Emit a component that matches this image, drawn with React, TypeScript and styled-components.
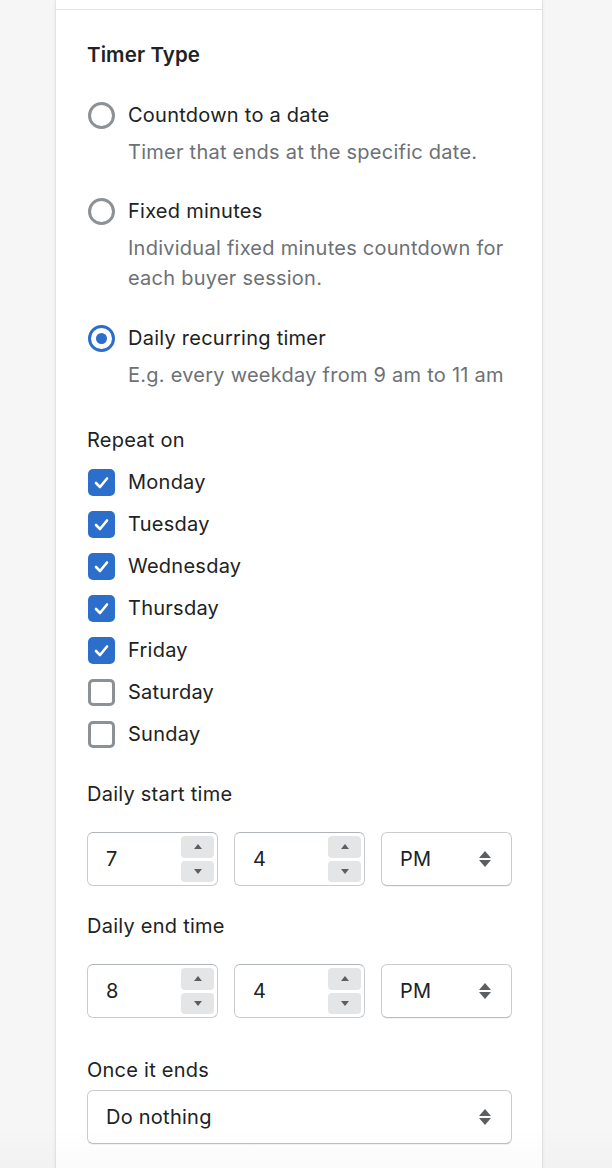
import React from "react";
import styled, { createGlobalStyle } from "styled-components";

const Global = createGlobalStyle`
  html, body { margin: 0; padding: 0; background: #f6f6f7; }
  body { font-family: Inter, "Noto Sans", "Liberation Sans", sans-serif; color: #202223; letter-spacing: 0.25px; }
  * { box-sizing: border-box; }
`;

const Page = styled.div`
  min-height: 1168px;
  position: relative;
  overflow: hidden;
`;

const Card = styled.div`
  margin-left: 56px;
  width: 486px;
  min-height: 1168px;
  background: #fff;
  box-shadow: 0 0 0 1px rgba(63, 63, 68, 0.06), 0 1px 4px rgba(63, 63, 68, 0.12);
`;

const TopSection = styled.div`
  height: 10px;
  border-bottom: 1px solid #e1e3e5;
`;

const Section = styled.div`
  padding: 30px 31px 40px 31px;
  display: flex;
  flex-direction: column;
`;

const Heading = styled.h2`
  margin: 0;
  font-size: 20.5px;
  font-weight: 600;
  line-height: 30px;
  letter-spacing: 0.1px;
`;

const ChoiceList = styled.div<{ $mt: number }>`
  display: flex;
  flex-direction: column;
  margin-top: ${(p) => p.$mt}px;
`;

const Choice = styled.div<{ $mt?: number }>`
  margin-top: ${(p) => p.$mt ?? 0}px;
`;

const ChoiceRow = styled.label`
  display: flex;
  align-items: center;
  gap: 13px;
  height: 30px;
  font-size: 20px;
  line-height: 30px;
`;

const Help = styled.div`
  margin-top: 7px;
  padding-left: 41px;
  font-size: 20px;
  line-height: 30px;
  color: #6d7175;
`;

const RadioCircle = styled.span<{ $on?: boolean }>`
  flex: none;
  margin-left: 1px;
  width: 27px;
  height: 27px;
  border-radius: 50%;
  border: 3px solid ${(p) => (p.$on ? "#2c6ecb" : "#8c9196")};
  display: flex;
  align-items: center;
  justify-content: center;
  &::after {
    content: "";
    width: 11px;
    height: 11px;
    border-radius: 50%;
    background: ${(p) => (p.$on ? "#2c6ecb" : "transparent")};
  }
`;

const Label = styled.div<{ $mt: number }>`
  margin-top: ${(p) => p.$mt}px;
  font-size: 20px;
  line-height: 30px;
`;

const CheckList = styled.div`
  display: flex;
  flex-direction: column;
  gap: 12px;
  margin-top: 12px;
`;

const Box = styled.span<{ $on?: boolean }>`
  flex: none;
  margin-left: 1px;
  width: 27px;
  height: 27px;
  border-radius: 5px;
  border: ${(p) => (p.$on ? "none" : "3px solid #8c9196")};
  background: ${(p) => (p.$on ? "#2c6ecb" : "#fff")};
  display: flex;
  align-items: center;
  justify-content: center;
`;

const TimeRow = styled.div<{ $mt: number }>`
  display: grid;
  grid-template-columns: 131px 131px 131px;
  gap: 16px;
  margin-top: ${(p) => p.$mt}px;
`;

const Field = styled.div`
  position: relative;
  height: 54px;
  border: 1px solid #c9cccf;
  border-top-color: #aeb4b9;
  border-radius: 6px;
  background: #fff;
  display: flex;
  align-items: center;
  padding-left: 18px;
  font-size: 20px;
`;

const SelectField = styled(Field)`
  border-color: #c9cccf;
  border-bottom-color: #babfc3;
  box-shadow: 0 1px 0 rgba(22, 29, 37, 0.05);
  justify-content: space-between;
  padding-right: 20px;
`;

const Spinner = styled.div`
  position: absolute;
  right: 3px;
  top: 3px;
  bottom: 3px;
  width: 33px;
  display: flex;
  flex-direction: column;
  gap: 3px;
`;

const SpinBtn = styled.div`
  flex: 1;
  background: #e4e5e7;
  border-radius: 4px;
  display: flex;
  align-items: center;
  justify-content: center;
`;

const Tri = styled.span<{ $down?: boolean }>`
  width: 0;
  height: 0;
  border-left: 4px solid transparent;
  border-right: 4px solid transparent;
  ${(p) => (p.$down ? "border-top: 5px solid #5c5f62;" : "border-bottom: 5px solid #5c5f62;")}
`;

const Arrows = styled.span`
  display: flex;
  flex-direction: column;
  gap: 2px;
`;

const ArrowTri = styled.span<{ $down?: boolean }>`
  width: 0;
  height: 0;
  border-left: 6px solid transparent;
  border-right: 6px solid transparent;
  ${(p) => (p.$down ? "border-top: 7px solid #5c5f62;" : "border-bottom: 7px solid #5c5f62;")}
`;

const WideSelect = styled(SelectField)<{ $mt: number }>`
  margin-top: ${(p) => p.$mt}px;
  width: 425px;
  padding-left: 18px;
`;

const Fade = styled.div`
  position: absolute;
  left: 0;
  right: 0;
  bottom: 0;
  height: 60px;
  pointer-events: none;
  background: linear-gradient(to bottom, rgba(0, 0, 0, 0), rgba(0, 0, 0, 0.025));
`;

const Check = () => (
  <svg width="19" height="19" viewBox="0 0 19 19">
    <polyline points="4,10 8,14 15,5.5" fill="none" stroke="#fff" strokeWidth="2.6" strokeLinecap="round" strokeLinejoin="round" />
  </svg>
);

const NumberField = ({ value }: { value: string }) => (
  <Field>
    {value}
    <Spinner>
      <SpinBtn><Tri /></SpinBtn>
      <SpinBtn><Tri $down /></SpinBtn>
    </Spinner>
  </Field>
);

const Ampm = () => (
  <SelectField>
    PM
    <Arrows><ArrowTri /><ArrowTri $down /></Arrows>
  </SelectField>
);

const days: [string, boolean][] = [
  ["Monday", true],
  ["Tuesday", true],
  ["Wednesday", true],
  ["Thursday", true],
  ["Friday", true],
  ["Saturday", false],
  ["Sunday", false],
];

export default function App() {
  return (
    <Page>
      <Global />
      <Card>
        <TopSection />
        <Section>
          <Heading>Timer Type</Heading>
          <ChoiceList $mt={30}>
            <Choice>
              <ChoiceRow><RadioCircle />Countdown to a date</ChoiceRow>
              <Help>Timer that ends at the specific date.</Help>
            </Choice>
            <Choice $mt={29}>
              <ChoiceRow><RadioCircle />Fixed minutes</ChoiceRow>
              <Help>Individual fixed minutes countdown for each buyer session.</Help>
            </Choice>
            <Choice $mt={30}>
              <ChoiceRow><RadioCircle $on />Daily recurring timer</ChoiceRow>
              <Help>E.g. every weekday from 9 am to 11 am</Help>
            </Choice>
          </ChoiceList>
          <Label $mt={35}>Repeat on</Label>
          <CheckList>
            {days.map(([d, on]) => (
              <ChoiceRow key={d}>
                <Box $on={on}>{on && <Check />}</Box>
                {d}
              </ChoiceRow>
            ))}
          </CheckList>
          <Label $mt={30}>Daily start time</Label>
          <TimeRow $mt={23}>
            <NumberField value="7" />
            <NumberField value="4" />
            <Ampm />
          </TimeRow>
          <Label $mt={25}>Daily end time</Label>
          <TimeRow $mt={23}>
            <NumberField value="8" />
            <NumberField value="4" />
            <Ampm />
          </TimeRow>
          <Label $mt={37}>Once it ends</Label>
          <WideSelect $mt={5}>
            Do nothing
            <Arrows><ArrowTri /><ArrowTri $down /></Arrows>
          </WideSelect>
        </Section>
      </Card>
      <Fade />
    </Page>
  );
}
